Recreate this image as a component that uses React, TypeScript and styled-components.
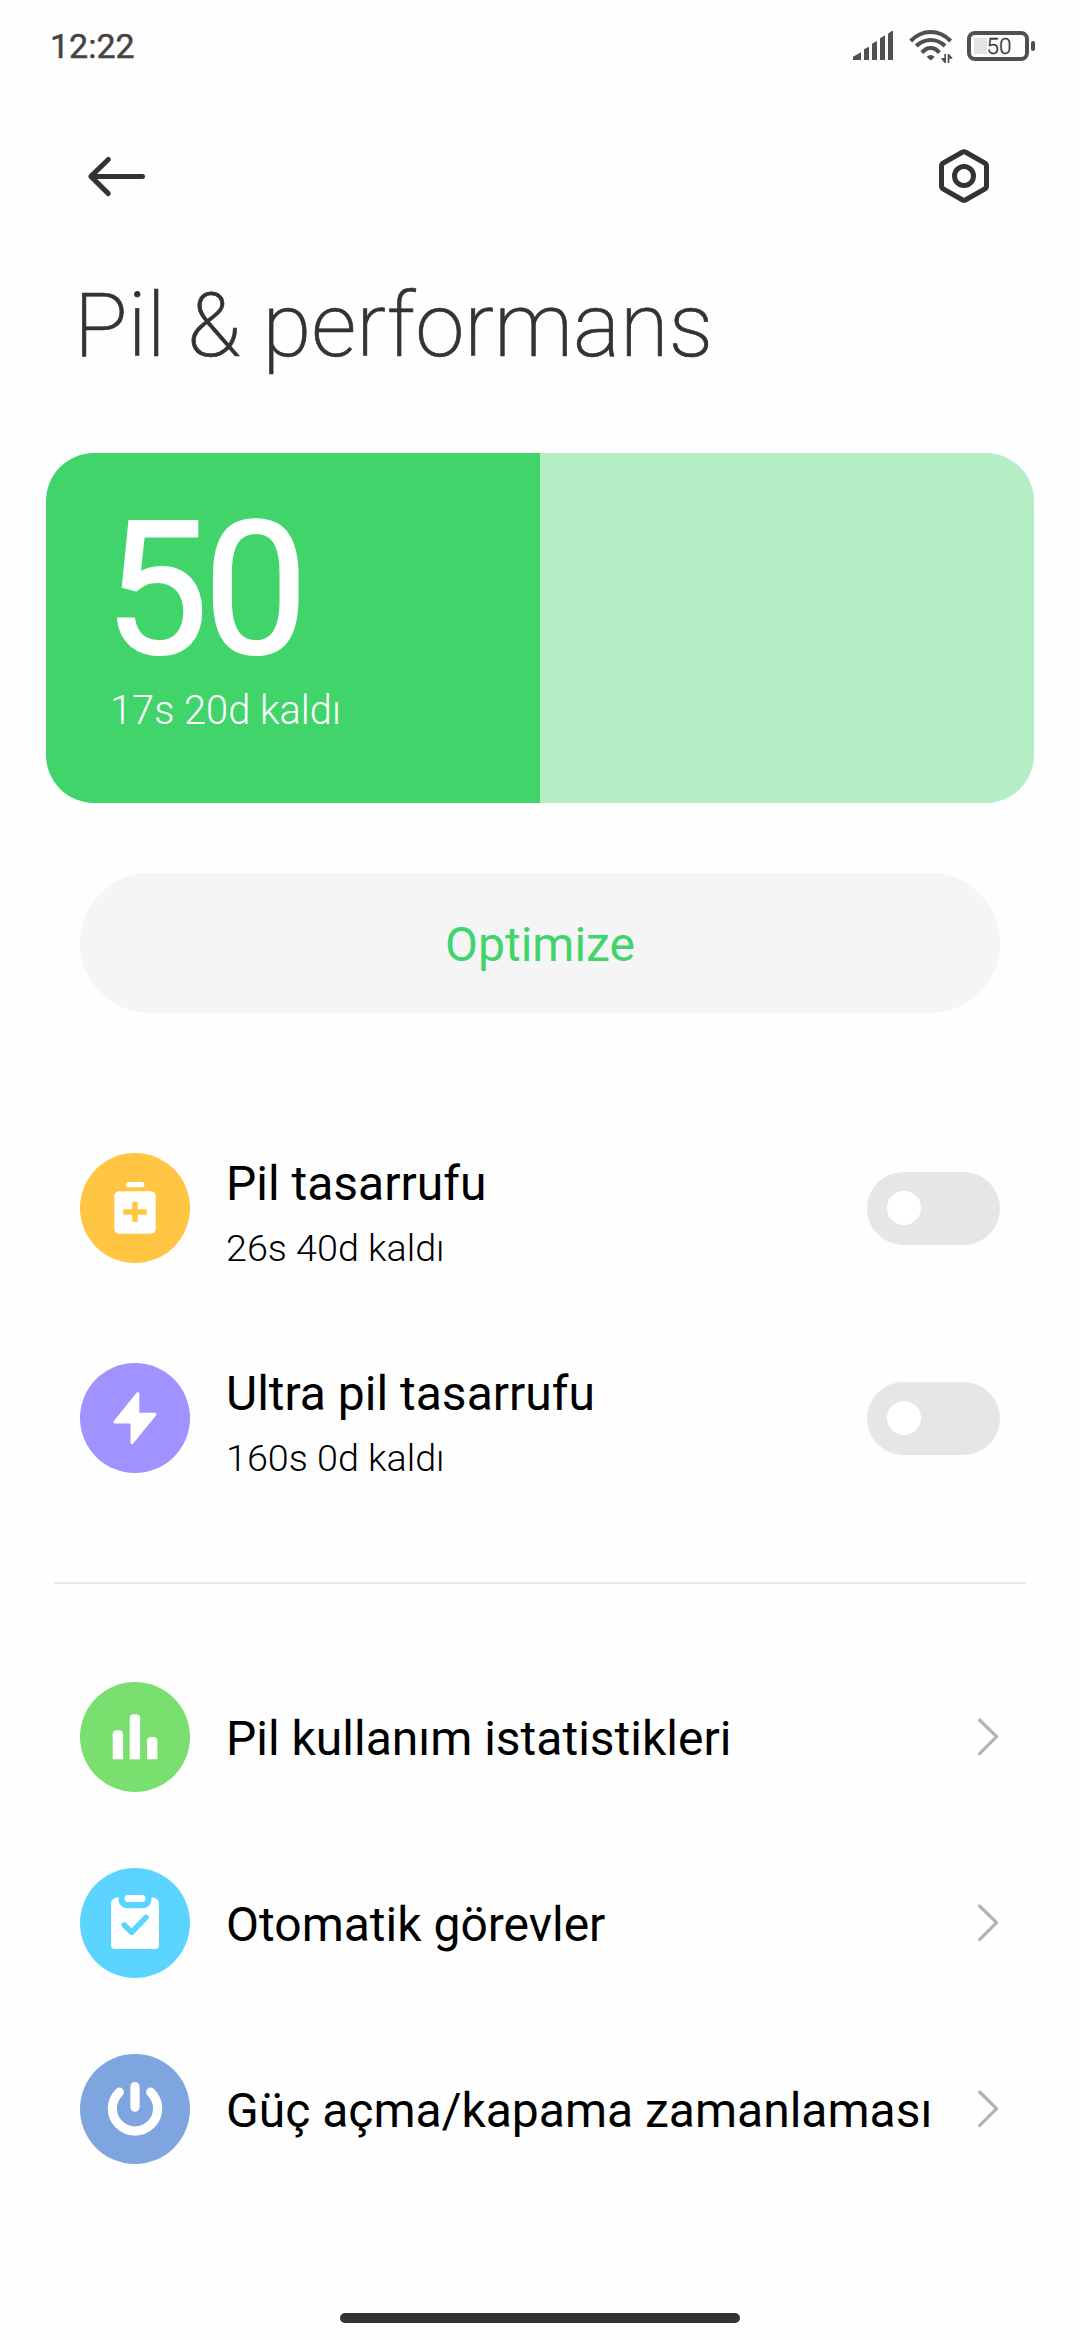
import React, { useState } from "react";
import styled, { createGlobalStyle } from "styled-components";

const GlobalStyle = createGlobalStyle`
  *, *::before, *::after { box-sizing: border-box; }
  body {
    margin: 0;
    background: #fff;
    font-family: Roboto, "Noto Sans", sans-serif;
    color: #000;
  }
  button { font: inherit; border: 0; background: none; padding: 0; margin: 0; color: inherit; }
`;

const Screen = styled.main`
  width: 1080px;
  height: 2340px;
  display: flex;
  flex-direction: column;
  background: #fefefe;
  overflow: hidden;
`;

const StatusBar = styled.header`
  height: 92px;
  padding: 0 45px 0 50px;
  display: flex;
  align-items: center;
  justify-content: space-between;
`;

const Clock = styled.span`
  font-size: 34px;
  line-height: 40px;
  color: #444;
  -webkit-text-stroke: 0.5px #444;
`;

const StatusIcons = styled.div`
  display: flex;
  align-items: center;
  color: #505050;
`;

const StatusGlyph = styled.svg<{ $gap: number }>`
  display: block;
  margin-right: ${(p) => p.$gap}px;
`;

const BatteryBadge = styled.div`
  display: flex;
  align-items: center;
  gap: 2px;
`;

const BatteryShell = styled.div`
  width: 62px;
  height: 30px;
  border: 4px solid #505050;
  border-radius: 8px;
  padding: 3px 2px 3px 4px;
  display: flex;
  align-items: center;
  justify-content: center;
  font-size: 22.5px;
  line-height: 22px;
  font-weight: 300;
  color: #333;
  -webkit-text-stroke: 0.3px #333;
  background: linear-gradient(#e4e4e4, #e4e4e4) 3px 3px / 13px 16px no-repeat;
`;

const BatteryNub = styled.div`
  width: 4px;
  height: 10px;
  border-radius: 2px;
  background: #505050;
`;

const Toolbar = styled.nav`
  height: 168px;
  padding: 0 85px 0 83px;
  display: flex;
  align-items: center;
  justify-content: space-between;
  color: #333;
`;

const IconButton = styled.button`
  display: flex;
  align-items: center;
  justify-content: center;
  svg { display: block; }
`;

const Title = styled.h1`
  margin: 0;
  height: 193px;
  padding: 14px 74px 0;
  font-size: 88.6px;
  line-height: 104px;
  font-weight: 200;
  color: #333;
  -webkit-text-stroke: 0.7px #333;
  white-space: nowrap;
`;

const ChargeCard = styled.section<{ $level: number }>`
  height: 350px;
  margin: 0 46px;
  padding: 56px 64px 0;
  border-radius: 48px;
  display: flex;
  flex-direction: column;
  color: #fff;
  background: linear-gradient(90deg, #41d46b ${(p) => p.$level}%, #b3eec5 ${(p) => p.$level}%);
`;

const ChargeValue = styled.strong`
  margin-left: -6px;
  font-size: 186px;
  line-height: 160px;
  font-weight: 400;
  letter-spacing: -5px;
  -webkit-text-stroke: 2px #fff;
`;

const ChargeNote = styled.span`
  margin-top: 19px;
  font-size: 39.8px;
  line-height: 46px;
  font-weight: 300;
`;

const OptimizeButton = styled.button`
  && {
    height: 140px;
    margin: 70px 80px 0;
    padding-top: 3px;
    border-radius: 70px;
    background: #f5f5f5;
    color: #41d46b;
    font-size: 48px;
    line-height: 56px;
  }
`;

const ModeList = styled.section`
  margin-top: 90px;
  padding: 0 80px;
  display: flex;
  flex-direction: column;
`;

const LinkList = styled.section`
  padding: 60px 80px 0;
  display: flex;
  flex-direction: column;
`;

const Row = styled.div<{ $height: number }>`
  height: ${(p) => p.$height}px;
  display: flex;
  align-items: center;
`;

const IconDisc = styled.div<{ $color: string }>`
  width: 110px;
  height: 110px;
  flex: none;
  border-radius: 50%;
  background: ${(p) => p.$color};
  svg { display: block; }
`;

const RowText = styled.div<{ $offset: number }>`
  flex: 1;
  margin-left: 36px;
  padding-top: ${(p) => p.$offset}px;
  display: flex;
  flex-direction: column;
  white-space: nowrap;
`;

const RowTitle = styled.span`
  font-size: 48px;
  line-height: 56px;
`;

const RowNote = styled.span`
  margin-top: 11px;
  font-size: 37.7px;
  line-height: 50px;
  font-weight: 300;
`;

const ToggleTrack = styled.button<{ $on: boolean }>`
  && {
    width: 133px;
    height: 73px;
    padding: 0 20px;
    border-radius: 37px;
    display: flex;
    align-items: center;
    justify-content: ${(p) => (p.$on ? "flex-end" : "flex-start")};
    background: ${(p) => (p.$on ? "#41d46b" : "#e6e6e6")};
  }
`;

const ToggleKnob = styled.span`
  width: 34px;
  height: 34px;
  border-radius: 50%;
  background: #fff;
`;

const Divider = styled.hr`
  width: 972px;
  height: 2px;
  margin: 59px auto 0;
  border: 0;
  background: #e6e6e6;
`;

const Chevron = styled.svg`
  display: block;
  flex: none;
`;

const HomeBar = styled.div`
  width: 400px;
  height: 10px;
  margin: auto auto 17px;
  border-radius: 5px;
  background: #333;
`;

function Disc({ color, children }: { color: string; children: React.ReactNode }) {
  return (
    <IconDisc $color={color}>
      <svg width="110" height="110" viewBox="0 0 110 110" fill="#fff">{children}</svg>
    </IconDisc>
  );
}

const savingIcon = (
  <Disc color="#ffc543">
    <rect x="46" y="29" width="18.4" height="5.2" rx="2.6" />
    <rect x="34.3" y="38.3" width="41.4" height="42.4" rx="5" />
    <path d="M55 48.7V69M43.2 59H66.8" stroke="#ffc543" strokeWidth="5.4" />
  </Disc>
);

const ultraIcon = (
  <Disc color="#9e93ff">
    <path
      d="M57.8 30.6V51.3H75L52 79.6V58.9H35Z"
      stroke="#fff" strokeWidth="3" strokeLinejoin="round"
    />
  </Disc>
);

const statsIcon = (
  <Disc color="#79e070">
    <path d="M32.7 77.3V52.5q0-4.2 4.2-4.2h2q4.2 0 4.2 4.2v24.8z" />
    <path d="M49.7 77.3V36.5q0-4.2 4.2-4.2h2q4.2 0 4.2 4.2v40.8z" />
    <path d="M67 77.3V59.2q0-4.2 4.2-4.2h2q4.2 0 4.2 4.2v18.1z" />
  </Disc>
);

const tasksIcon = (
  <Disc color="#5bd4ff">
    <path d="M38.5 29.3C34 29.5 31 32 31 36v41q0 4 4 4h40q4 0 4-4V36c0-4-3-6.5-7.5-6.7V31.3a9 9 0 0 1-9 9h-15a9 9 0 0 1-9-9z" />
    <rect x="44.5" y="27" width="21" height="7" rx="3.5" />
    <path d="M44.3 57L51.6 64.4L66 49.4" fill="none" stroke="#5bd4ff" strokeWidth="5.6" strokeLinecap="round" strokeLinejoin="round" />
  </Disc>
);

const powerIcon = (
  <Disc color="#7ea5e0">
    <path
      d="M55 32.6V53.2M39.3 38.2A22.6 22.6 0 1 0 70.7 38.2"
      fill="none" stroke="#fff" strokeWidth="9.2" strokeLinecap="round"
    />
  </Disc>
);

function SignalIcon() {
  return (
    <StatusGlyph $gap={15} width="42" height="32" viewBox="66 57 126 96" fill="currentColor">
      <path d="M69 147V137L93 124V147ZM102 147V115L117 107V147ZM126 147V98L141 90V147ZM150 147V82L165 73V147ZM174 147V68L185 60H189V147Z" />
    </StatusGlyph>
  );
}

function WifiIcon() {
  return (
    <StatusGlyph $gap={14} width="44" height="36" viewBox="235 54 132 108" fill="none" stroke="currentColor" strokeWidth="12.5">
      <path d="M240 93Q266 66 300 66T360 93M257 108Q276 90 300 90T343 108M274 128Q285 114 300 114T326 128" />
      <path d="M288 140Q300 130 312 140L303 149Q300 152 297 149Z" fill="currentColor" stroke="none" />
      <path d="M346 132V159H342L332 147V144H341V132ZM351 159V132H355L365 143V146H356V159Z" fill="currentColor" stroke="none" />
    </StatusGlyph>
  );
}

function Toggle({ label }: { label: string }) {
  const [on, setOn] = useState(false);
  return (
    <ToggleTrack $on={on} role="switch" aria-checked={on} aria-labelledby={label} onClick={() => setOn(!on)}>
      <ToggleKnob />
    </ToggleTrack>
  );
}

const modes = [
  { id: "saver", icon: savingIcon, title: "Pil tasarrufu", note: "26s 40d kaldı" },
  { id: "ultra", icon: ultraIcon, title: "Ultra pil tasarrufu", note: "160s 0d kaldı" },
];

const links = [
  { icon: statsIcon, title: "Pil kullanım istatistikleri" },
  { icon: tasksIcon, title: "Otomatik görevler" },
  { icon: powerIcon, title: "Güç açma/kapama zamanlaması" },
];

export default function App() {
  return (
    <>
      <GlobalStyle />
      <Screen>
        <StatusBar>
          <Clock>12:22</Clock>
          <StatusIcons>
            <SignalIcon />
            <WifiIcon />
            <BatteryBadge>
              <BatteryShell>50</BatteryShell>
              <BatteryNub />
            </BatteryBadge>
          </StatusIcons>
        </StatusBar>

        <Toolbar>
          <IconButton>
            <svg width="66" height="50" viewBox="0 0 66 50" fill="none" stroke="currentColor" strokeWidth="5" strokeLinecap="round" strokeLinejoin="round">
              <path d="M59.5 25.4H8M25.3 8.5L7.9 25.4L25.3 42.6" />
            </svg>
          </IconButton>
          <IconButton>
            <svg width="62" height="62" viewBox="0 0 62 62" fill="none" stroke="currentColor" strokeWidth="5" strokeLinejoin="round">
              <path d="M29.2 7.3Q31 6.3 32.8 7.3L51.7 18Q53.5 19 53.5 21V41Q53.5 43 51.7 44L32.8 54.7Q31 55.7 29.2 54.7L10.3 44Q8.5 43 8.5 41V21Q8.5 19 10.3 18Z" />
              <circle cx="31" cy="31" r="9.5" />
            </svg>
          </IconButton>
        </Toolbar>

        <Title>Pil &amp; performans</Title>

        <ChargeCard $level={50}>
          <ChargeValue>50</ChargeValue>
          <ChargeNote>17s 20d kaldı</ChargeNote>
        </ChargeCard>

        <OptimizeButton>Optimize</OptimizeButton>

        <ModeList>
          {modes.map((m) => (
            <Row key={m.id} $height={210}>
              {m.icon}
              <RowText $offset={13}>
                <RowTitle id={m.id}>{m.title}</RowTitle>
                <RowNote>{m.note}</RowNote>
              </RowText>
              <Toggle label={m.id} />
            </Row>
          ))}
        </ModeList>

        <Divider />

        <LinkList>
          {links.map((l) => (
            <Row key={l.title} $height={186}>
              {l.icon}
              <RowText $offset={3}>
                <RowTitle>{l.title}</RowTitle>
              </RowText>
              <Chevron width="24" height="42" viewBox="0 0 24 42" fill="none" stroke="#b3b3b3" strokeWidth="3.2" strokeLinecap="round" strokeLinejoin="round">
                <path d="M3.6 4L20.6 20.7L3.6 37.6" />
              </Chevron>
            </Row>
          ))}
        </LinkList>

        <HomeBar />
      </Screen>
    </>
  );
}
